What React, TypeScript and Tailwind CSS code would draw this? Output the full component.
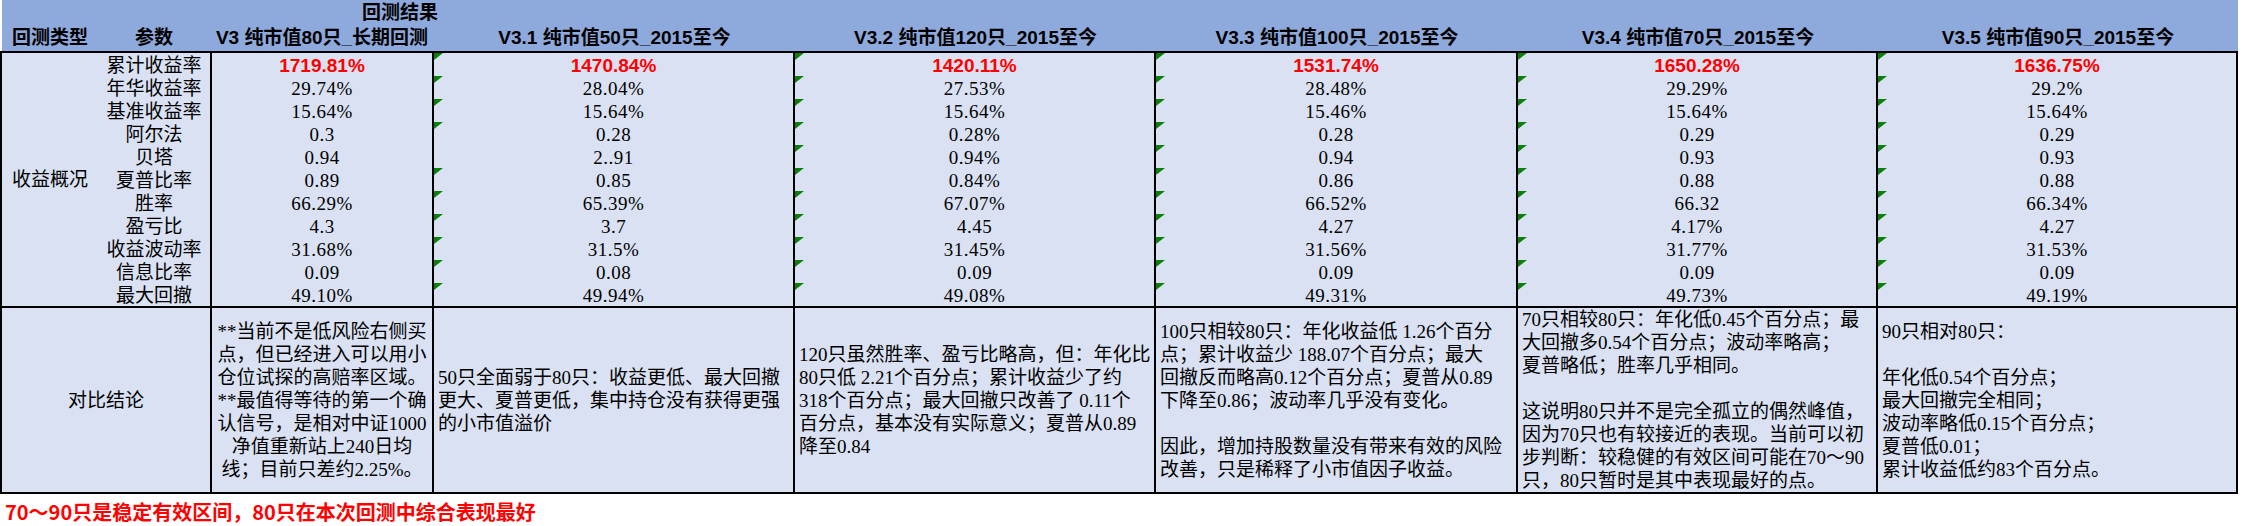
const labels = [
  "累计收益率",
  "年华收益率",
  "基准收益率",
  "阿尔法",
  "贝塔",
  "夏普比率",
  "胜率",
  "盈亏比",
  "收益波动率",
  "信息比率",
  "最大回撤",
];

type Version = {
  title: string;
  head: string;
  body: string;
  values: string[];
  noMark: number[];
  marks: boolean;
  lines: string[];
  center?: boolean;
};

const versions: Version[] = [
  {
    title: "V3 纯市值80只_长期回测",
    head: "w-[224px]",
    body: "w-[222px] border-r-2",
    values: ["1719.81%", "29.74%", "15.64%", "0.3", "0.94", "0.89", "66.29%", "4.3", "31.68%", "0.09", "49.10%"],
    marks: false,
    noMark: [],
    center: true,
    lines: [
      "**当前不是低风险右侧买",
      "点，但已经进入可以用小",
      "仓位试探的高赔率区域。",
      "**最值得等待的第一个确",
      "认信号，是相对中证1000",
      "净值重新站上240日均",
      "线；目前只差约2.25%。",
    ],
  },
  {
    title: "V3.1 纯市值50只_2015至今",
    head: "w-[361px]",
    body: "w-[361px] border-r-2",
    values: ["1470.84%", "28.04%", "15.64%", "0.28", "2..91", "0.85", "65.39%", "3.7", "31.5%", "0.08", "49.94%"],
    marks: true,
    noMark: [4],
    lines: [
      "50只全面弱于80只：收益更低、最大回撤",
      "更大、夏普更低，集中持仓没有获得更强",
      "的小市值溢价",
    ],
  },
  {
    title: "V3.2 纯市值120只_2015至今",
    head: "w-[361px]",
    body: "w-[361px] border-r-2",
    values: ["1420.11%", "27.53%", "15.64%", "0.28%", "0.94%", "0.84%", "67.07%", "4.45", "31.45%", "0.09", "49.08%"],
    marks: true,
    noMark: [],
    lines: [
      "120只虽然胜率、盈亏比略高，但：年化比",
      "80只低 2.21个百分点；累计收益少了约",
      "318个百分点；最大回撤只改善了 0.11个",
      "百分点，基本没有实际意义；夏普从0.89",
      "降至0.84",
    ],
  },
  {
    title: "V3.3 纯市值100只_2015至今",
    head: "w-[362px]",
    body: "w-[362px] border-r-2",
    values: ["1531.74%", "28.48%", "15.46%", "0.28", "0.94", "0.86", "66.52%", "4.27", "31.56%", "0.09", "49.31%"],
    marks: true,
    noMark: [],
    lines: [
      "100只相较80只：年化收益低 1.26个百分",
      "点；累计收益少 188.07个百分点；最大",
      "回撤反而略高0.12个百分点；夏普从0.89",
      "下降至0.86；波动率几乎没有变化。",
      "",
      "因此，增加持股数量没有带来有效的风险",
      "改善，只是稀释了小市值因子收益。",
    ],
  },
  {
    title: "V3.4 纯市值70只_2015至今",
    head: "w-[360px]",
    body: "w-[360px] border-r-2",
    values: ["1650.28%", "29.29%", "15.64%", "0.29", "0.93", "0.88", "66.32", "4.17%", "31.77%", "0.09", "49.73%"],
    marks: true,
    noMark: [],
    lines: [
      "70只相较80只：年化低0.45个百分点；最",
      "大回撤多0.54个百分点；波动率略高；",
      "夏普略低；胜率几乎相同。",
      "",
      "这说明80只并不是完全孤立的偶然峰值，",
      "因为70只也有较接近的表现。当前可以初",
      "步判断：较稳健的有效区间可能在70～90",
      "只，80只暂时是其中表现最好的点。",
    ],
  },
  {
    title: "V3.5 纯市值90只_2015至今",
    head: "w-[360px]",
    body: "w-[358px]",
    values: ["1636.75%", "29.2%", "15.64%", "0.29", "0.93", "0.88", "66.34%", "4.27", "31.53%", "0.09", "49.19%"],
    marks: true,
    noMark: [],
    lines: [
      "90只相对80只：",
      "",
      "年化低0.54个百分点；",
      "最大回撤完全相同；",
      "波动率略低0.15个百分点；",
      "夏普低0.01；",
      "累计收益低约83个百分点。",
    ],
  },
];

const bodyFont = "font-['Liberation_Serif','Noto_Sans_CJK_SC',serif]";
const headFont = "font-['Liberation_Sans','Noto_Sans_CJK_SC',sans-serif]";

// excel "number stored as text" corner flag
function Mark() {
  return (
    <span className="absolute left-0 top-0 w-[9px] h-[7px] bg-[#0a800a] [clip-path:polygon(0_0,100%_0,0_100%)]" />
  );
}

export default function App() {
  return (
    <div className="w-[2243px] h-[526px] bg-white overflow-hidden text-black">
      {/* header band */}
      <div className={`flex w-[2238px] h-[51px] bg-[#8EA9DB] ${headFont} font-bold text-[19px] text-black`}>
        <div className="w-[98px] flex flex-col border-l-2 border-white">
          <div className="h-[25px]" />
          <div className="h-[26px] leading-[26px] text-center whitespace-nowrap">回测类型</div>
        </div>
        <div className="w-[112px] flex flex-col">
          <div className="h-[25px]" />
          <div className="h-[26px] leading-[26px] text-center">参数</div>
        </div>
        {versions.map((v, i) => (
          <div key={v.title} className={`${v.head} flex flex-col`}>
            <div className="h-[25px] leading-[25px] whitespace-nowrap pl-[152px]">{i === 0 ? "回测结果" : ""}</div>
            <div className="h-[26px] leading-[26px] text-center whitespace-nowrap">{v.title}</div>
          </div>
        ))}
      </div>

      {/* table body */}
      <div className={`w-[2238px] border-2 border-black ${bodyFont} text-[19px]`}>
        <div className="flex h-[255px] border-b-2 border-black bg-[#D9E1F2]">
          <div className="w-[210px] flex border-r-2 border-black">
            <div className="w-[96px] flex items-center justify-center pt-[2px]">收益概况</div>
            <div className="w-[112px] flex flex-col">
              {labels.map((l) => (
                <div key={l} className="h-[23px] pt-[3px] leading-[20px] text-center whitespace-nowrap">
                  {l}
                </div>
              ))}
            </div>
          </div>
          {versions.map((v) => (
            <div key={v.title} className={`${v.body} border-black flex flex-col`}>
              {v.values.map((val, r) => (
                <div key={r} className="relative h-[23px] pt-[3px] leading-[20px] text-center whitespace-nowrap">
                  {v.marks && !v.noMark.includes(r) && <Mark />}
                  {r === 0 ? (
                    <span className="font-['Liberation_Sans',sans-serif] font-bold text-[#FF0000]">{val}</span>
                  ) : (
                    <span className="tracking-[0.5px]">{val}</span>
                  )}
                </div>
              ))}
            </div>
          ))}
        </div>

        <div className="flex h-[184px] bg-[#D9E1F2] leading-[23px]">
          <div className="w-[210px] border-r-2 border-black flex items-center justify-center">对比结论</div>
          {versions.map((v) => (
            <div
              key={v.title}
              className={`${v.body} border-black flex flex-col justify-center ${v.center ? "items-center" : "pl-1"}`}
            >
              {v.lines.map((line, i) => (
                <div key={i} className="h-[23px] whitespace-nowrap">
                  {line}
                </div>
              ))}
            </div>
          ))}
        </div>
      </div>

      {/* footnote */}
      <div className="h-[32px] pl-[5px] pt-[7px] font-['Noto_Sans_CJK_SC',sans-serif] font-bold text-[20px] leading-[22px] text-[#FF0000] whitespace-nowrap">
        70～90只是稳定有效区间，80只在本次回测中综合表现最好
      </div>
    </div>
  );
}
